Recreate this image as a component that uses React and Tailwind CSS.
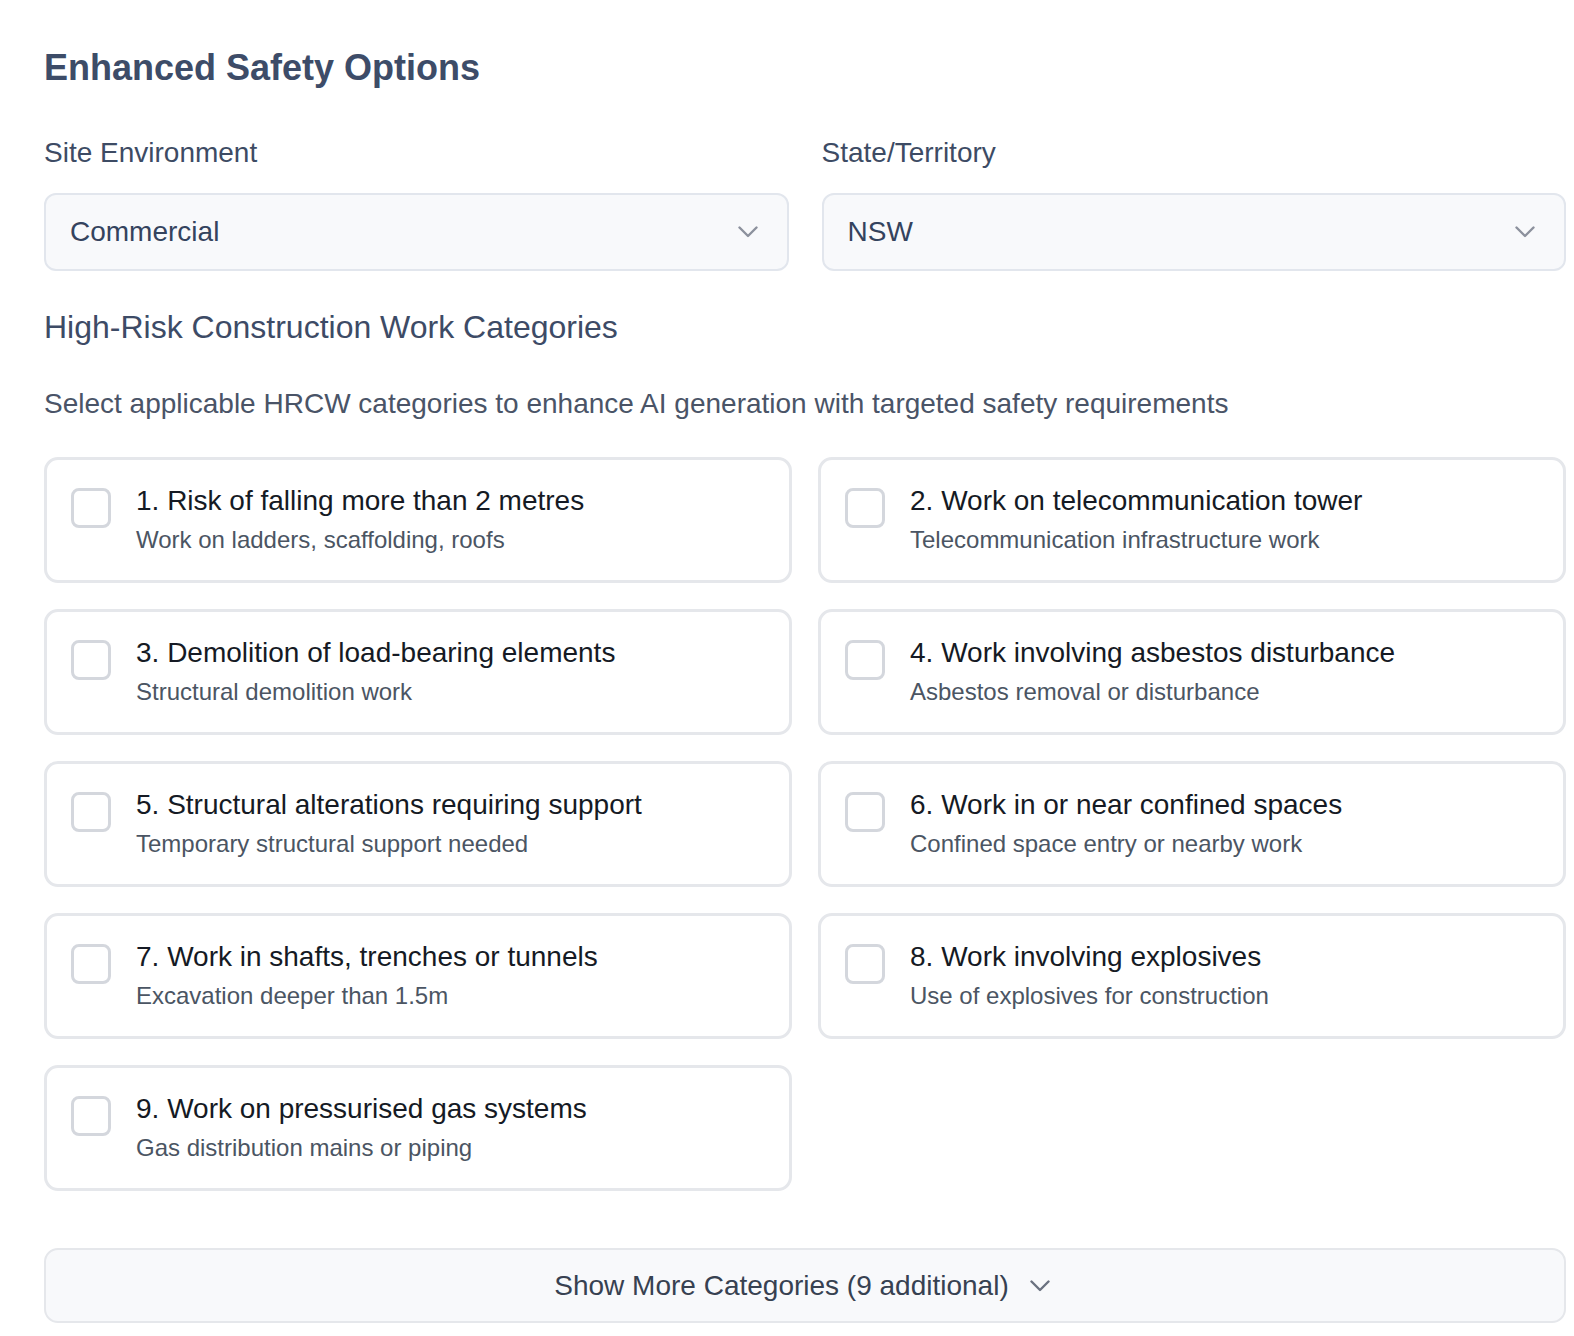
import React, { useState } from 'react';

const categories = [
  { id: 1, title: '1. Risk of falling more than 2 metres', desc: 'Work on ladders, scaffolding, roofs' },
  { id: 2, title: '2. Work on telecommunication tower', desc: 'Telecommunication infrastructure work' },
  { id: 3, title: '3. Demolition of load-bearing elements', desc: 'Structural demolition work' },
  { id: 4, title: '4. Work involving asbestos disturbance', desc: 'Asbestos removal or disturbance' },
  { id: 5, title: '5. Structural alterations requiring support', desc: 'Temporary structural support needed' },
  { id: 6, title: '6. Work in or near confined spaces', desc: 'Confined space entry or nearby work' },
  { id: 7, title: '7. Work in shafts, trenches or tunnels', desc: 'Excavation deeper than 1.5m' },
  { id: 8, title: '8. Work involving explosives', desc: 'Use of explosives for construction' },
  { id: 9, title: '9. Work on pressurised gas systems', desc: 'Gas distribution mains or piping' },
];

const Chevron = ({ className }) => (
  <svg width="20" height="12" viewBox="0 0 20 12" fill="none" className={className}>
    <polyline points="1.5,1.5 10,10 18.5,1.5" stroke="currentColor" strokeWidth="2.4" strokeLinecap="round" strokeLinejoin="round" />
  </svg>
);

const SelectBox = ({ label, value }) => (
  <div>
    <div className="text-[28px] leading-[40px] text-[#3d4b64]">{label}</div>
    <div className="mt-5 h-[78px] flex items-center justify-between rounded-[12px] border-2 border-[#e2e6ed] bg-[#f8f9fb] pl-6 pr-[29px]">
      <span className="text-[28px] text-[#34435e]">{value}</span>
      <Chevron className="text-[#8c919d]" />
    </div>
  </div>
);

const CategoryCard = ({ item, checked, onToggle }) => (
  <label className="flex gap-[25px] rounded-[14px] border-[3px] border-[#e5e7eb] bg-white px-6 pt-5 pb-[22px] cursor-pointer">
    <span
      onClick={onToggle}
      className={
        'mt-2 w-10 h-10 shrink-0 rounded-[8px] border-[3px] ' +
        (checked ? 'border-[#3d4c68] bg-[#3d4c68]' : 'border-[#d4d7dd] bg-white')
      }
    />
    <div>
      <div className="text-[28px] leading-[42px] text-[#151a24]">{item.title}</div>
      <div className="text-[24px] leading-[36px] text-[#4b5563]">{item.desc}</div>
    </div>
  </label>
);

export default function App() {
  const [selected, setSelected] = useState([]);

  const toggle = (id) => {
    setSelected(selected.includes(id) ? selected.filter((s) => s !== id) : [...selected, id]);
  };

  return (
    <div className="min-h-[1336px] bg-white font-['Liberation_Sans',Arial,sans-serif]">
      <div className="ml-[44px] w-[1522px] pt-[46px] pb-[13px]">
        <h2 className="text-[36px] leading-[44px] font-bold text-[#3d4c68]">Enhanced Safety Options</h2>

        {/* Environment + state selects */}
        <div className="mt-[43px] grid grid-cols-2 gap-x-[33px]">
          <SelectBox label="Site Environment" value="Commercial" />
          <SelectBox label="State/Territory" value="NSW" />
        </div>

        <h3 className="mt-9 text-[32px] leading-[40px] text-[#3d4b66]">High-Risk Construction Work Categories</h3>
        <p className="mt-[37px] text-[28px] leading-[40px] text-[#4a5467]">
          Select applicable HRCW categories to enhance AI generation with targeted safety requirements
        </p>

        {/* HRCW cards */}
        <div className="mt-[33px] grid grid-cols-2 gap-x-[26px] gap-y-[26px]">
          {categories.map((c) => (
            <CategoryCard key={c.id} item={c} checked={selected.includes(c.id)} onToggle={() => toggle(c.id)} />
          ))}
        </div>

        <button className="mt-[57px] w-full h-[75px] flex items-center justify-center gap-[21px] rounded-[14px] border-2 border-[#e5e7eb] bg-[#f8f9fb] pr-[6px] text-[28px] text-[#374151]">
          <span>Show More Categories (9 additional)</span>
          <Chevron className="text-[#6b7280]" />
        </button>
      </div>
    </div>
  );
}
